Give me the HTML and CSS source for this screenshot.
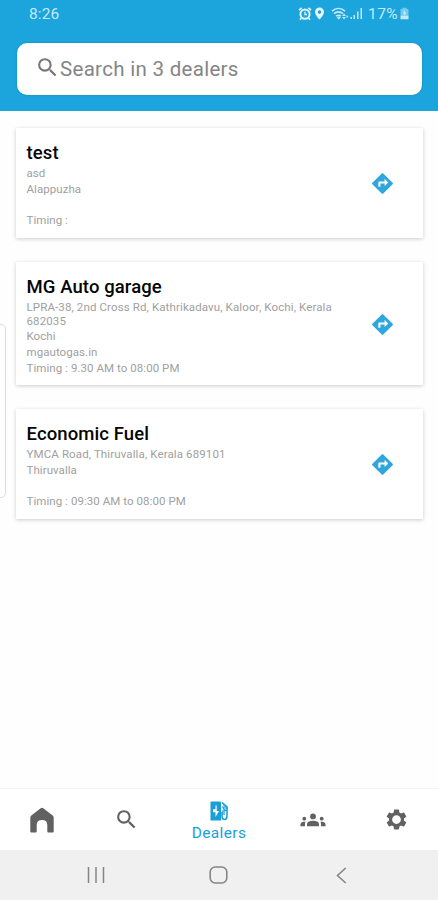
FILE: index.html
```html
<!DOCTYPE html>
<html lang="en">
<head>
<meta charset="utf-8">
<title>Dealers</title>
<link rel="stylesheet" href="styles.css">
</head>
<body>
<svg class="defs" width="0" height="0">
  <symbol id="directions" viewBox="0 0 24 24"><path fill="currentColor" d="M21.71 11.29l-9-9a1 1 0 0 0-1.42 0l-9 9a1 1 0 0 0 0 1.42l9 9a1 1 0 0 0 1.42 0l9-9a1 1 0 0 0 0-1.42zM14 14.5V12h-4v3H8v-4c0-.55.45-1 1-1h5V7.500l3.500 3.500-3.500 3.500z"/></symbol>
  <symbol id="search" viewBox="0 0 24 24"><path fill="currentColor" d="M15.500 14h-.79l-.28-.27A6.470 6.470 0 0 0 16 9.500 6.500 6.500 0 1 0 9.500 16c1.610 0 3.090-.59 4.230-1.570l.27.28v.79l5 4.990L20.490 19l-4.990-5zm-6 0a4.500 4.500 0 1 1 0-9 4.500 4.500 0 0 1 0 9z"/></symbol>
</svg>
<div class="screen">
  <header class="header">
    <div class="status">
      <span class="clock">8:26</span>
      <div class="status-icons">
        <svg class="alarm" viewBox="0 0 14 14"><path d="M1 3.200 3.600 1M13 3.200 10.400 1M3.200 11.200 2 12.800M10.800 11.200l1.200 1.600" stroke="currentColor" stroke-width="1.700"/><circle cx="7" cy="7.200" r="4.600" fill="none" stroke="currentColor" stroke-width="2"/><path d="M7 4.800v2.700h2" fill="none" stroke="currentColor" stroke-width="1.300"/></svg>
        <svg class="pin" viewBox="0 0 10 13"><path fill="currentColor" fill-rule="evenodd" d="M5 .5A4.500 4.500 0 0 0 .5 5C.5 8.200 5 12.500 5 12.500S9.500 8.200 9.500 5A4.500 4.500 0 0 0 5 .5zm0 2.800a1.800 1.800 0 1 1 0 3.600 1.800 1.800 0 0 1 0-3.600z"/></svg>
        <svg class="wifi" viewBox="0 0 18 14"><g fill="none" stroke="currentColor" stroke-width="1.600"><path d="M1 4.200c4-3.600 9-3.600 13 0M3 6.700c3-2.500 6-2.500 9 0M5 9.200c1.800-1.400 3.300-1.400 5 0"/></g><path fill="currentColor" d="m7.800 9.300 2 1.200-2 2-2-2zM13 6.500 15 9h-4zM11 10h4l-2 2.500zM15.500 8l2 1.500-2 1.500z"/></svg>
        <svg class="signal" viewBox="0 0 13 13"><path fill="currentColor" d="M.5 10h1.500v2H.5zM3.500 8H5v4H3.500zM7 4.500h1.500V12H7zM10.500 1H12v11h-1.500z"/></svg>
        <span class="percent">17%</span>
        <svg class="battery" viewBox="0 0 10 13"><path fill="currentColor" opacity=".55" d="M3 .8h4V2h2v6.500H1V2h2z"/><path fill="currentColor" d="M1 8.500h8v3.800H1zM5.500 3 3 6.500h1.600V9L7 5.500H5.500z"/></svg>
      </div>
    </div>
    <div class="search-box">
      <svg class="search-icon"><use href="#search"/></svg>
      <span class="placeholder">Search in 3 dealers</span>
    </div>
  </header>
  <main class="list">
    <article class="card">
      <div class="info">
        <h2>test</h2>
        <p>asd</p>
        <p>Alappuzha</p>
        <p></p>
        <p>Timing :</p>
      </div>
      <svg class="go"><use href="#directions"/></svg>
    </article>
    <article class="card">
      <div class="info">
        <h2>MG Auto garage</h2>
        <p class="long">LPRA-38, 2nd Cross Rd, Kathrikadavu, Kaloor, Kochi, Kerala<br>682035</p>
        <p>Kochi</p>
        <p>mgautogas.in</p>
        <p>Timing : 9.30 AM to 08:00 PM</p>
      </div>
      <svg class="go"><use href="#directions"/></svg>
    </article>
    <article class="card">
      <div class="info">
        <h2>Economic Fuel</h2>
        <p class="long">YMCA Road, Thiruvalla, Kerala 689101</p>
        <p>Thiruvalla</p>
        <p></p>
        <p>Timing : 09:30 AM to 08:00 PM</p>
      </div>
      <svg class="go"><use href="#directions"/></svg>
    </article>
  </main>
  <nav class="tabs">
    <div class="tab"><svg class="home" viewBox="0 0 24 26"><path fill="currentColor" d="M12 .7q.7 0 1.300.5l9.400 7.300q1 .8 1 2V24.500q0 1-1 1h-4.400q-1 0-1-1V18q0-5-5.300-5t-5.300 5v6.500q0 1-1 1H1.300q-1 0-1-1V10.500q0-1.200 1-2l9.400-7.300Q11.300.7 12 .7z"/></svg></div>
    <div class="tab"><svg class="find"><use href="#search"/></svg></div>
    <div class="tab active">
      <svg class="station" viewBox="0 0 19 20"><path fill="currentColor" fill-rule="evenodd" d="M1.500.5H10q1 0 1 1v18H.5v-18q0-1 1-1zM5.500 4.500v3.700H3v3h2.500V16l3.500-6H6.700V4.500z"/><path d="M12 1.500l5 4.500V15q0 3.500-2.500 3.500T12 15v-4M12.500 5.500l2 3.500 2.500 1" fill="none" stroke="currentColor" stroke-width="1.500"/><path fill="currentColor" d="M12 1l5.500 4v4L14 7zM12 9h3v5h-3z" opacity=".65"/></svg>
      <span class="tab-label">Dealers</span>
    </div>
    <div class="tab"><svg class="people" viewBox="0 0 26 14"><g fill="currentColor"><circle cx="13" cy="3.400" r="2.900"/><path d="M7 13.200v-2q0-3.500 6-3.500t6 3.500v2z"/><circle cx="4.300" cy="5.700" r="1.900"/><circle cx="21.700" cy="5.700" r="1.900"/><path d="M.4 13.200v-1.700q0-2.300 2.700-2.700h2.500q-.6 1-.6 2.200v2.200zM25.600 13.200v-1.700q0-2.300-2.700-2.700h-2.500q.6 1 .6 2.200v2.200z"/></g></svg></div>
    <div class="tab"><svg class="gear" viewBox="0 0 24 24"><path fill="currentColor" fill-rule="evenodd" d="M19.140 12.940c.04-.3.060-.61.060-.94s-.02-.64-.07-.94l2.030-1.580a.49.49 0 0 0 .12-.61l-1.920-3.320a.488.488 0 0 0-.59-.22l-2.390.96c-.5-.38-1.030-.7-1.620-.94l-.36-2.540a.484.484 0 0 0-.48-.41h-3.840c-.24 0-.43.17-.47.41l-.36 2.540c-.59.24-1.130.57-1.620.94l-2.390-.96c-.22-.08-.47 0-.59.22L2.740 8.870c-.12.21-.08.470.12.610l2.030 1.580c-.05.3-.09.630-.09.940s.02.640.070.940l-2.030 1.580a.49.49 0 0 0-.12.610l1.920 3.320c.12.220.370.290.590.220l2.390-.96c.5.380 1.030.7 1.620.94l.36 2.540c.05.240.240.410.480.410h3.840c.24 0 .44-.17.470-.41l.36-2.540c.59-.24 1.130-.56 1.620-.94l2.390.96c.22.080.470 0 .59-.22l1.920-3.320c.12-.22.070-.47-.12-.61l-2.010-1.580zM12 16.200a4.200 4.200 0 1 1 0-8.400 4.200 4.200 0 0 1 0 8.400z"/></svg></div>
  </nav>
  <div class="system">
    <svg class="recents" viewBox="0 0 18 16"><path d="M1.500 0v16M9 0v16M16.500 0v16" stroke="currentColor" stroke-width="1.500"/></svg>
    <svg class="home-key" viewBox="0 0 19 18"><rect x="1.200" y="1" width="16.600" height="16" rx="5" fill="none" stroke="currentColor" stroke-width="1.600"/></svg>
    <svg class="back" viewBox="0 0 11 17"><path d="M9.700 1 1.500 8.500 9.700 16" fill="none" stroke="currentColor" stroke-width="1.600"/></svg>
  </div>
  <div class="edge-handle"></div>
</div>
</body>
</html>
```
FILE: styles.css
```css
* { box-sizing: border-box; }
body { margin: 0; font-family: Roboto, "Liberation Sans", sans-serif; background: #fff; }
svg { display: block; flex: none; }
h2, p { margin: 0; }
.defs { position: absolute; }

.screen {
  position: relative;
  width: 438px;
  height: 900px;
  overflow: hidden;
  display: flex;
  flex-direction: column;
  background: #fefefe;
}

.header { height: 111px; flex: none; background: #1ca4dd; }
.status {
  height: 43px;
  padding: 0 27px 16px 29px;
  display: flex;
  align-items: center;
  justify-content: space-between;
  color: #c3eafa;
}
.clock { font-size: 15.500px; letter-spacing: .1px; }
.status-icons { display: flex; align-items: center; }
.alarm { width: 14px; height: 14px; color: #e2f5fd; }
.pin { width: 11px; height: 13px; margin-left: 2px; color: #e8f8ff; }
.wifi { width: 18px; height: 14px; margin-left: 6px; }
.signal { width: 13px; height: 13px; margin-left: 1px; }
.percent { font-size: 15.500px; margin-left: 5px; letter-spacing: .4px; }
.battery { width: 11px; height: 13px; margin: 0 1px 0 1px; }

.search-box {
  height: 51.500px;
  margin: 0 16.500px 0 17px;
  padding-left: 17.500px;
  display: flex;
  align-items: center;
  border-radius: 10px;
  background: #fff;
  color: #858585;
  box-shadow: 0 0 2px #0d83b8;
}
.search-icon { width: 25px; height: 25px; margin-top: -3px; color: #777; }
.placeholder { margin-left: .5px; font-size: 20.500px; letter-spacing: .3px; }

.list {
  flex: 1;
  padding: 17px 15px 0 16px;
  display: flex;
  flex-direction: column;
  gap: 24px;
}
.card {
  padding: 13px 29px 9px 10.500px;
  display: flex;
  align-items: center;
  background: #fff;
  box-shadow: 0 1px 4px rgba(0, 0, 0, .2);
}
.info { flex: 1; white-space: nowrap; }
.info h2 { height: 25px; font-size: 18.500px; line-height: 24.500px; font-weight: 500; letter-spacing: .1px; color: #050505; }
.info p { min-height: 15.700px; padding: 1px 0; font-size: 11.500px; line-height: 13.700px; letter-spacing: .06px; color: #a0a0a0; }
.info .long { letter-spacing: .12px; }
.go { width: 25px; height: 25px; margin: -3px -1px 0 0; color: #2fa6dc; }

.tabs {
  height: 62px;
  flex: none;
  display: flex;
  border-top: 1px solid #f3f3f3;
  background: #fff;
  color: #616161;
}
.tab {
  width: 84px;
  display: flex;
  flex-direction: column;
  align-items: center;
  justify-content: center;
}
.tab:nth-child(3) { width: 102px; }
.tab:nth-child(4) { width: 85px; }
.tab:nth-child(5) { width: 83px; }
.home { width: 24px; height: 26px; }
.find { width: 25px; height: 25px; }
.people { width: 26px; height: 14px; }
.gear { width: 25px; height: 25px; }
.active { padding-top: 5px; color: #189fd7; }
.station { width: 19px; height: 20px; }
.tab-label { margin-top: 2px; font-size: 15.500px; line-height: 20px; letter-spacing: .35px; }

.system {
  height: 50px;
  flex: none;
  padding: 0 91px 0 87px;
  display: flex;
  align-items: center;
  background: #f0f0f0;
  color: #858585;
}
.recents { width: 18px; height: 16px; }
.home-key { width: 19px; height: 18px; margin-left: 104px; }
.back { width: 11px; height: 17px; margin-left: 108px; }

.edge-handle {
  position: absolute;
  left: -8px;
  top: 324px;
  width: 13.500px;
  height: 174px;
  border: 1px solid #dcdcdc;
  border-radius: 5px;
  background: #fff;
}
```
